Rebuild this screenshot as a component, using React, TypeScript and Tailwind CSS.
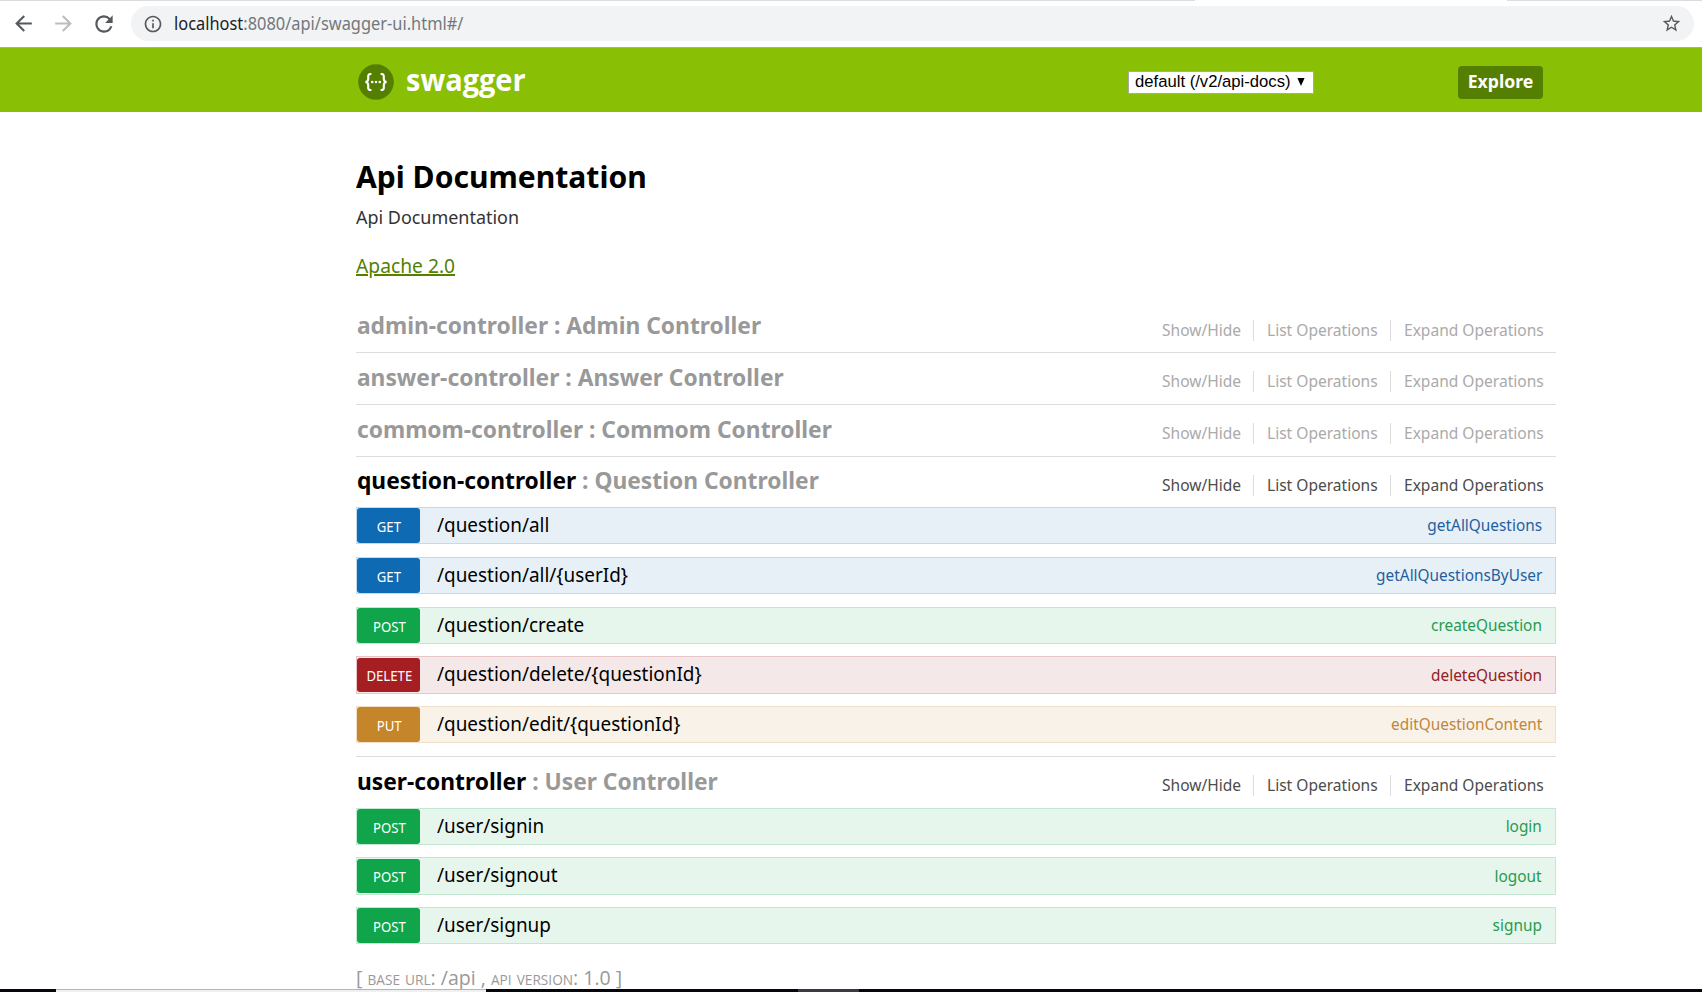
import type { ReactNode } from "react";
import { MdArrowBack, MdArrowForward, MdInfoOutline, MdRefresh, MdStarBorder } from "react-icons/md";

type Method = "GET" | "POST" | "DELETE" | "PUT";

interface Operation {
  method: Method;
  path: string;
  name: string;
  size: string;
}

interface Resource {
  id: string;
  description: string;
  heading: string;
  linksTop: string;
  operations?: Operation[];
}

const REGULAR = "h-[37px] mb-3";
const SPACED = "h-[37px] mb-[13px]";
const TALL = "h-[38px] mb-3";

const resources: Resource[] = [
  {
    id: "admin-controller",
    description: "Admin Controller",
    heading: "h-[51px] leading-[48px]",
    linksTop: "mt-[19px]",
  },
  {
    id: "answer-controller",
    description: "Answer Controller",
    heading: "h-[51px] leading-[48px]",
    linksTop: "mt-[18px]",
  },
  {
    id: "commom-controller",
    description: "Commom Controller",
    heading: "h-[51px] leading-[48px]",
    linksTop: "mt-[18px]",
  },
  {
    id: "question-controller",
    description: "Question Controller",
    heading: "h-[50px] leading-[46px]",
    linksTop: "mt-[18px]",
    operations: [
      { method: "GET", path: "/question/all", name: "getAllQuestions", size: SPACED },
      { method: "GET", path: "/question/all/{userId}", name: "getAllQuestionsByUser", size: SPACED },
      { method: "POST", path: "/question/create", name: "createQuestion", size: REGULAR },
      { method: "DELETE", path: "/question/delete/{questionId}", name: "deleteQuestion", size: TALL },
      { method: "PUT", path: "/question/edit/{questionId}", name: "editQuestionContent", size: SPACED },
    ],
  },
  {
    id: "user-controller",
    description: "User Controller",
    heading: "h-[51px] leading-[48px]",
    linksTop: "mt-[18px]",
    operations: [
      { method: "POST", path: "/user/signin", name: "login", size: REGULAR },
      { method: "POST", path: "/user/signout", name: "logout", size: TALL },
      { method: "POST", path: "/user/signup", name: "signup", size: REGULAR },
    ],
  },
];

const rowColors: Record<Method, string> = {
  GET: "bg-[#e7f0f7] border-[#c3d9ec]",
  POST: "bg-[#e7f6ec] border-[#c3e8d1]",
  DELETE: "bg-[#f5e8e8] border-[#e8c6c7]",
  PUT: "bg-[#f9f2e9] border-[#f0e0ca]",
};

const badgeColors: Record<Method, string> = {
  GET: "bg-[#0f6ab4]",
  POST: "bg-[#10a54a]",
  DELETE: "bg-[#a41e22]",
  PUT: "bg-[#c5862b]",
};

const nameColors: Record<Method, string> = {
  GET: "text-[#1f5f9f]",
  POST: "text-[#259b50]",
  DELETE: "text-[#8f2024]",
  PUT: "text-[#bd8740]",
};

function BrowserBar() {
  return (
    <div className="flex h-12 shrink-0 flex-col border-b border-[#a9b096] bg-white">
      <div className="flex h-px shrink-0 justify-between">
        <div className="w-[1195px] bg-[#dadce0]" />
        <div className="w-[195px] bg-[#dadce0]" />
      </div>
      <div className="flex items-center pt-[5px] pl-[11px]">
        <MdArrowBack className="size-[25px] text-[#55585c]" />
        <MdArrowForward className="ml-[15px] size-[25px] text-[#bbbdc0]" />
        <MdRefresh className="ml-[15px] size-[26px] text-[#55585c]" />
        <div className="ml-[14px] flex h-[35px] w-[1563px] items-center rounded-full bg-[#f1f3f4] pr-3 pl-3">
          <MdInfoOutline className="size-5 text-[#55585c]" />
          <span className="ml-[11px] origin-left scale-x-[0.937] pb-px text-[17.5px] leading-[26px] whitespace-nowrap text-[#74787c]">
            <span className="text-[#202124]">localhost</span>:8080/api/swagger-ui.html#/
          </span>
          <MdStarBorder className="ml-auto size-[21px] text-[#55585c]" />
        </div>
      </div>
    </div>
  );
}

function SwaggerMark() {
  return (
    <svg viewBox="0 0 36 36" className="size-9">
      <circle cx="18" cy="18" r="17.8" fill="#547f00" />
      <g fill="none" stroke="#fff" strokeWidth="2.1">
        <path d="M13.4 10h-.8c-1.7 0-2.4.8-2.4 2.3v2.8c0 1.7-.7 2.6-2.7 2.9 2 .3 2.7 1.2 2.7 2.9v2.8c0 1.5.7 2.3 2.4 2.3h.8" />
        <path d="M22.6 10h.8c1.7 0 2.4.8 2.4 2.3v2.8c0 1.7.7 2.6 2.7 2.9-2 .3-2.7 1.2-2.7 2.9v2.8c0 1.5-.7 2.3-2.4 2.3h-.8" />
      </g>
      <g fill="#fff">
        <circle cx="14.2" cy="18" r="1.3" />
        <circle cx="18" cy="18" r="1.3" />
        <circle cx="21.8" cy="18" r="1.3" />
      </g>
    </svg>
  );
}

function Header() {
  return (
    <header className="h-16 shrink-0 bg-[#89bf04] pl-[356px]">
      <div className="flex h-16 w-[1200px] items-center pt-[4px] pl-[2px]">
        <div className="flex items-center pb-px">
          <SwaggerMark />
          <span className="ml-3 w-[120px] origin-left scale-x-[0.965] pb-[3px] font-['Open_Sans',sans-serif] text-[30px] leading-8 font-bold text-white">
            swagger
          </span>
        </div>
        <div className="ml-[602px] flex h-[23px] w-[186px] items-center border border-[#a9a9a9] bg-white pl-[6px] font-['Liberation_Sans',sans-serif] text-[16.67px] leading-5 text-black">
          <span className="whitespace-nowrap">default (/v2/api-docs)</span>
          <svg viewBox="0 0 8 8" className="ml-[6px] size-2">
            <path d="M0.4 0h7.2L4 8z" />
          </svg>
        </div>
        <button className="ml-36 flex h-[33px] w-[85px] items-center justify-center rounded bg-[#547f00] pb-[3px] text-[18px] leading-6 font-bold text-white">
          <span className="scale-x-[0.98]">Explore</span>
        </button>
      </div>
    </header>
  );
}

function ActionLink({ width, children }: { width: string; children: ReactNode }) {
  return (
    <li className={`${width} h-[21px] leading-[19px]`}>
      <a className="inline-block origin-left scale-x-[0.942] whitespace-nowrap">{children}</a>
    </li>
  );
}

function OperationRow({ method, path, name, size }: Operation) {
  const tall = size === TALL;
  return (
    <li className={`flex border ${size} ${rowColors[method]}`}>
      <span
        className={`${badgeColors[method]} ${tall ? "mt-px mb-px leading-9" : "leading-[38px]"} flex w-[63px] shrink-0 justify-center overflow-hidden rounded-[3px] text-[14px] text-white`}
      >
        <span className="scale-x-[0.94] pl-px">{method}</span>
      </span>
      <span className="ml-[17px] origin-left scale-x-[0.97] text-[19.5px] leading-[33px] whitespace-nowrap text-black">
        {path}
      </span>
      <span
        className={`${nameColors[method]} ${tall ? "leading-[35px]" : "leading-[33px]"} mr-[13px] ml-auto origin-right scale-x-[0.932] text-[16.5px] whitespace-nowrap`}
      >
        {name}
      </span>
    </li>
  );
}

function ResourceSection({ id, description, heading, linksTop, operations, last }: Resource & { last: boolean }) {
  const open = Boolean(operations);
  return (
    <li className={last ? "" : "border-b border-[#dddddd]"}>
      <div className={`flex justify-between text-[24px] ${heading}`}>
        <h2 className="origin-left scale-x-[0.949] pl-px font-bold whitespace-nowrap text-[#999999]">
          <a className={open ? "text-black" : ""}>{id}</a> : {description}
        </h2>
        <ul
          className={`${linksTop} flex h-[21px] pr-[13px] text-[16.5px] ${open ? "text-[#4c4c4c]" : "text-[#aaaaaa]"}`}
        >
          <ActionLink width="w-[92px] border-r border-[#dddddd]">Show/Hide</ActionLink>
          <ActionLink width="w-[137px] border-r border-[#dddddd] pl-[13px]">List Operations</ActionLink>
          <ActionLink width="w-[152px] pl-[13px]">Expand Operations</ActionLink>
        </ul>
      </div>
      {operations && (
        <ul>
          {operations.map((operation) => (
            <OperationRow key={operation.path} {...operation} />
          ))}
        </ul>
      )}
    </li>
  );
}

export default function App() {
  return (
    <div className="flex h-screen flex-col overflow-hidden bg-white font-['Noto_Sans',sans-serif]">
      <BrowserBar />
      <Header />
      <main className="min-h-0 flex-1 overflow-hidden pl-[356px]">
        <div className="w-[1200px]">
          <h1 className="mt-11 origin-left scale-x-[0.97] text-[31px] leading-10 font-bold text-black">
            Api Documentation
          </h1>
          <p className="mt-[9px] origin-left scale-x-[0.957] text-[18.75px] leading-6 text-[#333333]">
            Api Documentation
          </p>
          <div className="mt-[25px] origin-left scale-x-[0.962] text-[20px] leading-6">
            <a className="text-[#547f00] underline decoration-2 underline-offset-1">Apache 2.0</a>
          </div>
          <ul className="mt-[23px]">
            {resources.map((resource, index) => (
              <ResourceSection key={resource.id} {...resource} last={index === resources.length - 1} />
            ))}
          </ul>
          <p className="mt-[22px] origin-left scale-x-[0.976] font-['Open_Sans',sans-serif] text-[20px] leading-6 whitespace-pre text-[#999999]">
            [ <span className="[font-variant:small-caps]">base url</span>: /api ,{" "}
            <span className="[font-variant:small-caps]">api version</span>: 1.0 ]
          </p>
        </div>
      </main>
      <div className="flex h-[3px] shrink-0 bg-[#05070f]">
        <div className="ml-14 w-[430px] border-t border-[#b4b4b4] bg-[#f0f0f0]" />
        <div className="ml-[312px] w-[61px] bg-[#3a3a42]" />
      </div>
    </div>
  );
}
